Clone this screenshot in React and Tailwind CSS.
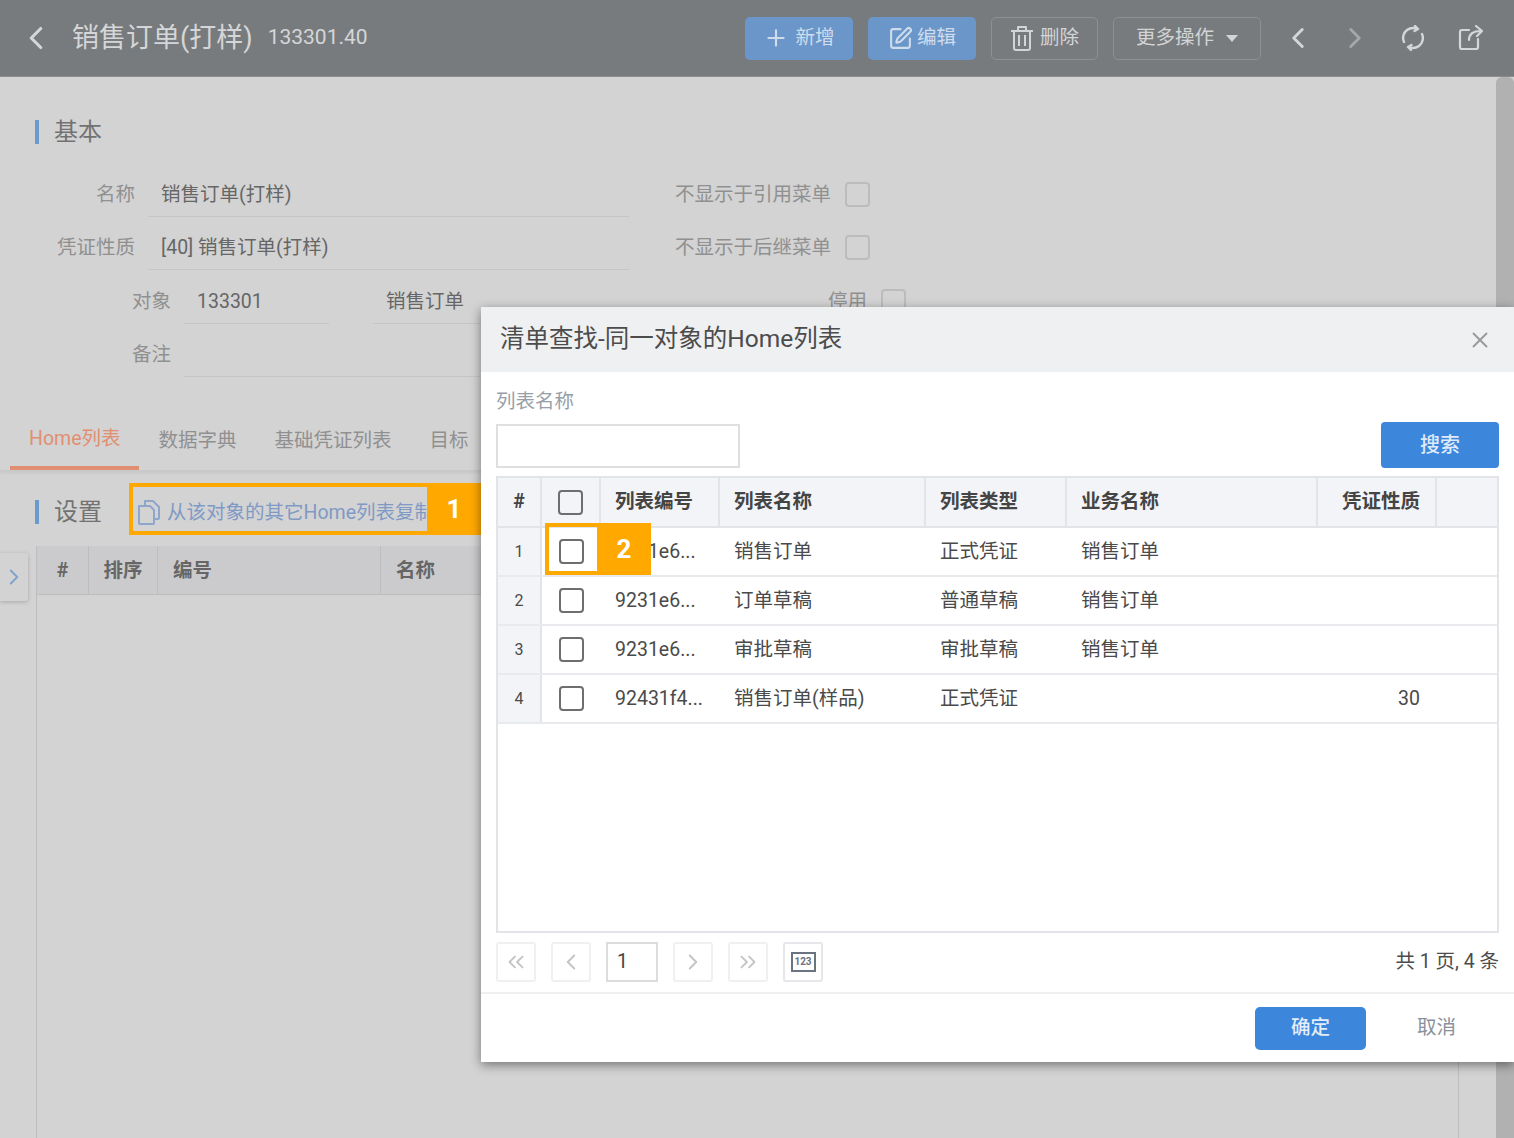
import React from 'react';
import { ChevronLeft, ChevronRight, ChevronsLeft, ChevronsRight, Plus, SquarePen, X } from 'lucide-react';

const font = 'font-["Roboto","Noto_Sans_CJK_SC",sans-serif]';
const gridCols = 'grid grid-cols-[44px_59px_119px_206px_141px_251px_119px_1fr]';

const rows = [
  { no: 1, code: '9231e6...', name: '销售订单', type: '正式凭证', biz: '销售订单', nature: '' },
  { no: 2, code: '9231e6...', name: '订单草稿', type: '普通草稿', biz: '销售订单', nature: '' },
  { no: 3, code: '9231e6...', name: '审批草稿', type: '审批草稿', biz: '销售订单', nature: '' },
  { no: 4, code: '92431f4...', name: '销售订单(样品)', type: '正式凭证', biz: '', nature: '30' },
];

function TrashIcon() {
  return (
    <svg width="24" height="26" viewBox="0 0 24 26" fill="none" stroke="currentColor" strokeWidth="2" strokeLinejoin="round">
      <path d="M1 6h22M8 5V2h8v3M4 6v17a2 2 0 0 0 2 2h12a2 2 0 0 0 2-2V6M9 10v11M15 10v11" />
    </svg>
  );
}

function SyncIcon() {
  return (
    <svg width="26" height="26" viewBox="0 0 26 26" fill="none" stroke="currentColor" strokeWidth="2.4" strokeLinecap="round" strokeLinejoin="round">
      <path d="M4 17a10 10 0 0 1 3-12c3-2 7-2.500 10-1M15 1l3 3-3.500 2" />
      <path d="M22 9a10 10 0 0 1-3 12c-3 2-7 2.500-10 1M11 25l-3-3 3.500-2" />
    </svg>
  );
}

function ShareIcon() {
  return (
    <svg width="26" height="26" viewBox="0 0 26 26" fill="none" stroke="currentColor" strokeWidth="2.2" strokeLinecap="round" strokeLinejoin="round">
      <path d="M11 5H4a2 2 0 0 0-2 2v15a2 2 0 0 0 2 2h14a2 2 0 0 0 2-2v-8" />
      <path d="M11 15c0-6 4-9 12-9M18 1l6 5-5 5" />
    </svg>
  );
}

function CopyIcon() {
  return (
    <svg width="24" height="26" viewBox="0 0 24 26" fill="none" stroke="#8fa6cb" strokeWidth="2" strokeLinejoin="round">
      <path d="M8 6V2h8l6 6v11a1 1 0 0 1-1 1h-4" />
      <path d="M2 7h11l4 4v13a1 1 0 0 1-1 1H3a1 1 0 0 1-1-1z" />
    </svg>
  );
}

function Box({ className = '' }) {
  return <span className={`block w-[25px] h-[25px] rounded-[4px] border-2 ${className}`} />;
}

function SectionTitle({ children }) {
  return (
    <div className="flex items-center h-[24px]">
      <span className="w-[4px] h-[24px] bg-[#6c9acb]" />
      <span className="ml-[15px] text-[24px] text-[#727272]">{children}</span>
    </div>
  );
}

function FormRow({ label, value, side }) {
  return (
    <div className="flex items-center h-[53.3px]">
      <span className="w-[135px] text-right text-[19.5px] text-[#909090]">{label}</span>
      <div className="ml-[13px] w-[481px] h-[44px] mt-[1px] flex items-center pl-[13px] border-b border-[#c6c6c6] text-[19.5px] text-[#666]">
        {value}
      </div>
      <span className="w-[202px] text-right text-[19.5px] text-[#909090]">{side}</span>
      <Box className="ml-[14px] border-[#bcbcbc]" />
    </div>
  );
}

function HeaderButton({ children, solid, className = '' }) {
  return (
    <button
      className={`h-[43px] flex items-center justify-center rounded-[5px] text-[19.5px] ${
        solid ? 'bg-[#6b96c9] text-[#cfdcec]' : 'border border-[#8e9194] text-[#d3d4d5]'
      } ${className}`}
    >
      {children}
    </button>
  );
}

function PageButton({ children }) {
  return (
    <button className="w-[40px] h-[40px] flex items-center justify-center rounded-[3px] border-2 border-[#eff0f2] text-[#c4c5c7]">
      {children}
    </button>
  );
}

function Dialog() {
  return (
    <div className="absolute left-[481px] right-0 top-[307px] h-[755px] flex flex-col bg-white shadow-[0_3px_10px_rgba(0,0,0,0.45)]">
      <div className="h-[65px] shrink-0 flex items-center justify-between pl-[19px] pr-[21px] bg-[#eff0f2]">
        <span className="text-[24.500px] text-[#4c4c4c]">清单查找-同一对象的Home列表</span>
        <X size={26} strokeWidth={1.800} className="text-[#9b9b9b]" />
      </div>

      <div className="px-[15px] flex-1 flex flex-col">
        <div className="mt-[16px] h-[27px] flex items-center text-[19.5px] text-[#97a0a8]">列表名称</div>
        <div className="mt-[7px] h-[46px] flex justify-between items-start">
          <div className="mt-[2px] w-[244px] h-[44px] border-2 border-[#dfdfe1]" />
          <button className="w-[118px] h-[46px] rounded-[4px] bg-[#3c86dc] text-[20px] font-medium text-[#dfeafa]">搜索</button>
        </div>

        <div className="mt-[8px] h-[457px] border-2 border-[#e3e4e8]">
          <div className={`${gridCols} h-[50px] bg-[#f3f4f7] border-b-2 border-[#e3e4e8] text-[19.5px] font-bold text-[#444]`}>
            <div className="flex items-center justify-center border-r-2 border-[#e3e4e8]">#</div>
            <div className="flex items-center justify-center border-r-2 border-[#e3e4e8]"><Box className="border-[#6e6e70]" /></div>
            <div className="flex items-center pl-[14px] border-r-2 border-[#e3e4e8]">列表编号</div>
            <div className="flex items-center pl-[14px] border-r-2 border-[#e3e4e8]">列表名称</div>
            <div className="flex items-center pl-[14px] border-r-2 border-[#e3e4e8]">列表类型</div>
            <div className="flex items-center pl-[14px] border-r-2 border-[#e3e4e8]">业务名称</div>
            <div className="flex items-center justify-end pr-[15px] border-r-2 border-[#e3e4e8]">凭证性质</div>
            <div />
          </div>
          {rows.map((r) => (
            <div key={r.no} className={`${gridCols} h-[49px] border-b-2 border-[#e9eaed] text-[19.5px] text-[#4a4a4a]`}>
              <div className="flex items-center justify-center bg-[#f3f4f7] border-r-2 border-[#e3e4e8] text-[16px]">{r.no}</div>
              <div className="flex items-center justify-center"><Box className="border-[#6e6e70]" /></div>
              <div className="flex items-center pl-[14px] whitespace-nowrap">{r.code}</div>
              <div className="flex items-center pl-[14px]">{r.name}</div>
              <div className="flex items-center pl-[14px]">{r.type}</div>
              <div className="flex items-center pl-[14px]">{r.biz}</div>
              <div className="flex items-center justify-end pr-[17px]">{r.nature}</div>
              <div />
            </div>
          ))}
        </div>

        <div className="mt-[9px] h-[40px] flex items-center justify-between">
          <div className="flex items-center gap-[15px]">
            <PageButton><ChevronsLeft size={26} strokeWidth={1.800} /></PageButton>
            <PageButton><ChevronLeft size={26} strokeWidth={1.800} /></PageButton>
            <div className="w-[52px] h-[40px] flex items-center pl-[9px] border-2 border-[#dcdcdc] text-[19.5px] text-[#444]">1</div>
            <PageButton><ChevronRight size={26} strokeWidth={1.800} /></PageButton>
            <PageButton><ChevronsRight size={26} strokeWidth={1.800} /></PageButton>
            <button className="w-[40px] h-[40px] flex items-center justify-center rounded-[3px] border-2 border-[#e6e7ea]">
              <span className="w-[25px] h-[20px] flex items-center justify-center border-2 border-[#6b7280] text-[10px] font-bold leading-none text-[#6b7280]">123</span>
            </button>
          </div>
          <span className="text-[19.5px] text-[#4c4c4c]">共 1 页, 4 条</span>
        </div>
      </div>

      <div className="h-[70px] shrink-0 flex items-center border-t-2 border-[#eff0f2]">
        <button className="ml-[774px] w-[111px] h-[43px] rounded-[5px] bg-[#3c86dc] text-[19.5px] font-medium text-[#e3edfa]">确定</button>
        <span className="ml-[51px] text-[19.5px] text-[#8a919b]">取消</span>
      </div>
    </div>
  );
}

export default function App() {
  return (
    <div className={`relative w-[1514px] h-[1138px] overflow-hidden bg-[#d3d3d3] ${font}`}>
      {/* Top bar */}
      <div className="h-[77px] flex items-center bg-[#787b7e] border-b border-[#8a8c8e] text-[#d5d6d7]">
        <ChevronLeft size={38} strokeWidth={2} className="ml-[17px]" />
        <span className="ml-[17px] text-[27px] text-[#d5d6d7]">销售订单(打样)</span>
        <span className="ml-[15px] text-[21px] text-[#d5d6d7]">133301.40</span>
        <div className="ml-auto flex items-center pr-[30px]">
          <div className="flex gap-[15px]">
            <HeaderButton solid className="w-[108px] gap-[6px]"><Plus size={26} strokeWidth={2} />新增</HeaderButton>
            <HeaderButton solid className="w-[108px] gap-[4px]"><SquarePen size={25} strokeWidth={2} />编辑</HeaderButton>
            <HeaderButton className="w-[107px] gap-[6px]"><TrashIcon />删除</HeaderButton>
            <HeaderButton className="w-[148px] gap-[12px]">
              更多操作
              <span className="w-0 h-0 border-x-[6px] border-x-transparent border-t-[7px] border-t-[#d3d4d5]" />
            </HeaderButton>
          </div>
          <ChevronLeft size={34} strokeWidth={2} className="ml-[20px]" />
          <ChevronRight size={34} strokeWidth={2} className="ml-[23px] text-[#a5a7a9]" />
          <div className="ml-[28px]"><SyncIcon /></div>
          <div className="ml-[32px]"><ShareIcon /></div>
        </div>
      </div>

      <div className="flex h-[1061px]">
        <div className="flex-1 min-w-0 flex flex-col">
          <div className="ml-[35px] mt-[43px]"><SectionTitle>基本</SectionTitle></div>

          <div className="mt-[24px]">
            <FormRow label="名称" value="销售订单(打样)" side="不显示于引用菜单" />
            <FormRow label="凭证性质" value="[40] 销售订单(打样)" side="不显示于后继菜单" />
            <div className="flex items-center h-[53.3px]">
              <span className="w-[171px] text-right text-[19.5px] text-[#909090]">对象</span>
              <div className="ml-[13px] w-[145px] h-[44px] mt-[1px] flex items-center pl-[13px] border-b border-[#c6c6c6] text-[19.5px] text-[#666]">133301</div>
              <div className="ml-[44px] w-[292px] h-[44px] mt-[1px] flex items-center pl-[13px] border-b border-[#c6c6c6] text-[19.5px] text-[#666]">销售订单</div>
              <span className="w-[202px] text-right text-[19.5px] text-[#909090]">停用</span>
              <Box className="ml-[14px] border-[#bcbcbc]" />
            </div>
            <div className="flex items-center h-[53.3px]">
              <span className="w-[171px] text-right text-[19.5px] text-[#909090]">备注</span>
              <div className="ml-[13px] w-[481px] h-[44px] mt-[1px] border-b border-[#c6c6c6]" />
            </div>
          </div>

          {/* Tabs */}
          <div className="mt-[29px] h-[61px] pl-[10px] flex items-end border-b border-[#c9c9c9] shadow-[0_2px_3px_rgba(0,0,0,0.06)] text-[19.5px]">
            <div className="h-[60px] px-[19px] flex items-center border-b-4 border-[#e08f72] text-[#e08f72]">Home列表</div>
            <div className="h-[60px] px-[19px] flex items-center text-[#909090]">数据字典</div>
            <div className="h-[60px] px-[19px] flex items-center text-[#909090]">基础凭证列表</div>
            <div className="h-[60px] px-[19px] flex items-center text-[#909090]">目标</div>
          </div>

          {/* Settings row */}
          <div className="mt-[29px] ml-[35px] flex items-center h-[24px]">
            <SectionTitle>设置</SectionTitle>
            <div className="ml-[35px] flex items-center gap-[6px] text-[19.5px] whitespace-nowrap text-[#7f9ac5]">
              <CopyIcon />
              从该对象的其它Home列表复制
            </div>
          </div>

          {/* Background table */}
          <div className="mt-[22px] ml-[36px] mr-[37px] flex-1 border-x border-[#bdbdbd]">
            <div className="h-[49px] flex bg-[#cbcbcd] border-b border-[#bdbdbf] text-[19.5px] font-bold text-[#666]">
              <div className="w-[52px] flex items-center justify-center border-r border-[#bdbdbf]">#</div>
              <div className="w-[69px] flex items-center justify-center border-r border-[#bdbdbf]">排序</div>
              <div className="w-[223px] flex items-center pl-[15px] border-r border-[#bdbdbf]">编号</div>
              <div className="flex-1 flex items-center pl-[15px]">名称</div>
            </div>
          </div>
        </div>

        {/* Scrollbar */}
        <div className="w-[18px] rounded-t-[6px] bg-[#b1b1b1]" />
      </div>

      {/* Collapsed side tab */}
      <div className="absolute left-0 top-[553px] w-[28px] h-[48px] flex items-center justify-center rounded-r-[3px] bg-[#d3d3d3] shadow-[0_1px_4px_rgba(0,0,0,0.2)]">
        <ChevronRight size={26} strokeWidth={1.800} className="text-[#7fa3cc]" />
      </div>

      {/* Step 1 callout */}
      <div className="absolute left-[129px] top-[483px] w-[352px] h-[52px] border-4 border-[#ffa800]">
        <div className="absolute right-[-4px] top-[-4px] bottom-[-4px] w-[54px] flex items-center justify-center bg-[#ffa800] text-[26px] font-bold text-white">1</div>
      </div>

      <Dialog />

      {/* Step 2 callout */}
      <div className="absolute left-[545px] top-[523px] w-[106px] h-[52px] border-4 border-[#ffa800]">
        <div className="absolute right-[-4px] top-[-4px] bottom-[-4px] w-[54px] flex items-center justify-center bg-[#ffa800] text-[26px] font-bold text-white">2</div>
      </div>
    </div>
  );
}
